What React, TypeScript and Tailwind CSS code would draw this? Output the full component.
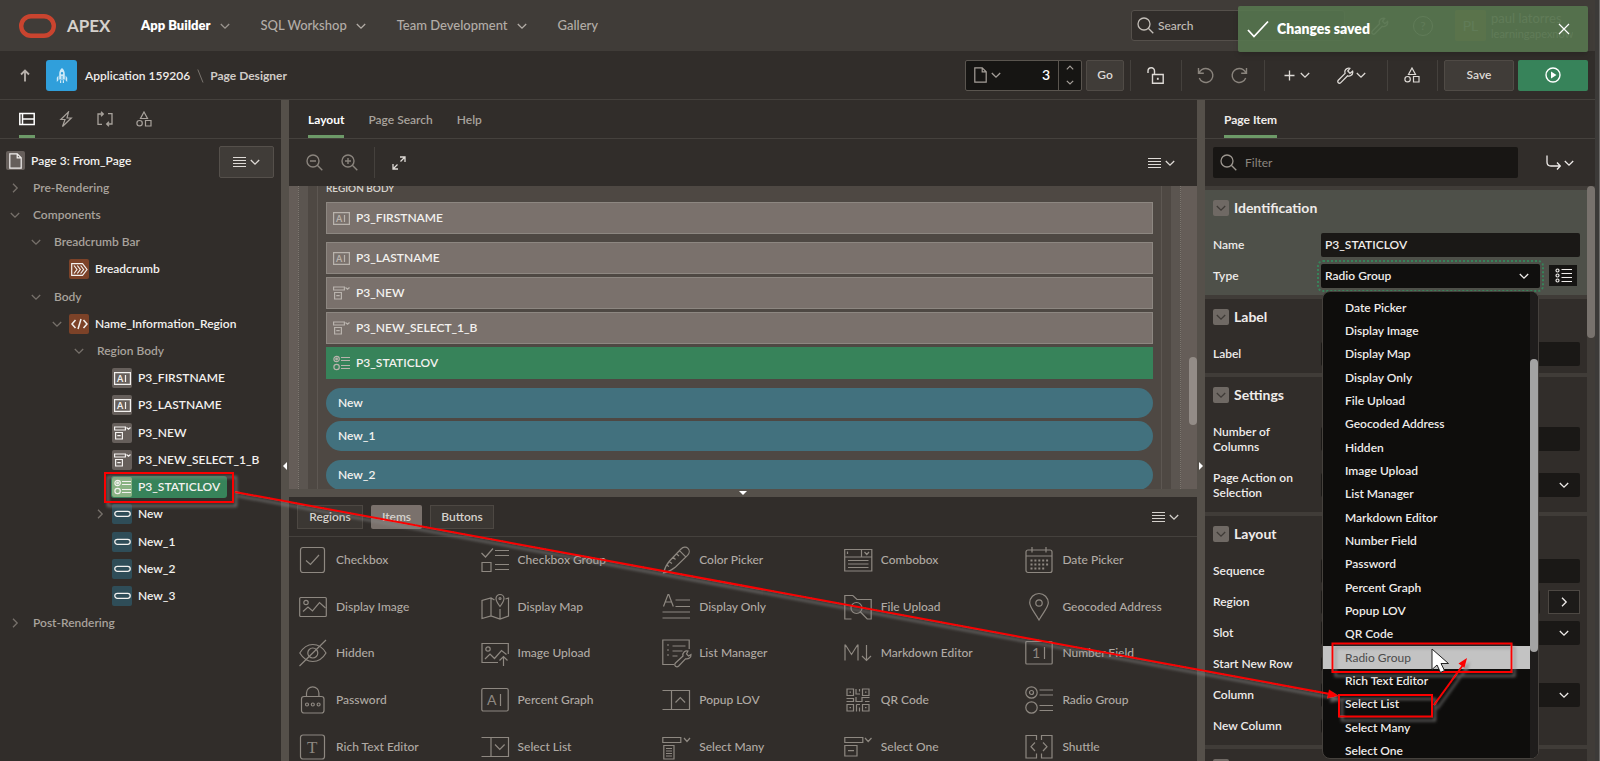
import React from "react";

type IconProps = { children?: React.ReactNode; size?: string; box?: string; stroke?: number; className?: string };

function Icon({ children, size = "size-4", box = "0 0 16 16", stroke = 1, className = "" }: IconProps) {
  return (
    <svg
      viewBox={box}
      className={`${size} shrink-0 ${className}`}
      fill="none"
      stroke="currentColor"
      strokeWidth={stroke}
      aria-hidden="true"
    >
      {children}
    </svg>
  );
}

const ChevronDown = ({ className = "" }: { className?: string }) => (
  <Icon size="w-[10px] h-[10px]" box="0 0 10 10" stroke={1.3} className={className}>
    <path d="M.8 3 5 7.2 9.2 3" />
  </Icon>
);

const ChevronRight = ({ className = "" }: { className?: string }) => (
  <Icon size="w-[10px] h-[10px]" box="0 0 10 10" stroke={1.3} className={className}>
    <path d="M3 .8 7.2 5 3 9.2" />
  </Icon>
);

const Lines = () => (
  <Icon size="w-[13px] h-[12px]" box="0 0 13 12" stroke={1}>
    <path d="M0 1.5h13M0 4.5h13M0 7.5h13M0 10.5h13" />
  </Icon>
);

const SearchIcon = ({ className = "" }: { className?: string }) => (
  <Icon size="size-[17px]" box="0 0 17 17" stroke={1.3} className={className}>
    <circle cx="7" cy="7" r="6" />
    <path d="m11.3 11.3 5 5" />
  </Icon>
);

const Shapes = ({ className = "" }: { className?: string }) => (
  <Icon stroke={1.2} className={className}>
    <path d="M8 1 11.5 7.5h-7z" />
    <circle cx="3.6" cy="12.2" r="2.7" />
    <path d="M9.5 9.5H15V15H9.5z" />
  </Icon>
);

const Wrench = ({ className = "", size = "size-[17px]" }: { className?: string; size?: string }) => (
  <Icon size={size} box="0 0 17 17" stroke={1.3} className={className}>
    <path d="M15.6 4.2 13 6.3 10.8 4l2-2.6C11 .8 8.600 1.800 8 3.800c-.3 1-.1 1.900.1 2.600L1.300 13.200c-.7.8-.7 1.900 0 2.500.7.7 1.800.6 2.500-.1l6.800-6.800c1 .4 2.300.3 3.200-.3 1.500-.9 2.200-2.700 1.800-4.300z" />
  </Icon>
);

const TextFieldGlyph = () => (
  <Icon size="w-[17px] h-[13px]" box="0 0 17 13" stroke={1.2}>
    <path d="M.6.6h15.800v11.800H.6zM11.500 3v7" />
    <text x="3" y="9.800" fontSize="9" fontWeight="700" fill="currentColor" stroke="none">A</text>
  </Icon>
);

const SelectOneGlyph = () => (
  <Icon size="w-[17px] h-[14px]" box="0 0 17 14" stroke={1.2}>
    <path d="M.6 1h10.800v3H.6zM1.600 6.500h6.800v6.500H1.600zM3.300 9.700h3.400M12.500 1.500l2 1.800 2-1.800" />
  </Icon>
);

const RadioGlyph = () => (
  <Icon size="w-[17px] h-[16px]" box="0 0 17 16" stroke={1.2}>
    <circle cx="3.600" cy="4" r="2.700" />
    <circle cx="3.600" cy="4" r=".8" />
    <circle cx="3.600" cy="12" r="2.700" />
    <path d="M8 2.500h9M8 5.500h9M8 10.500h9M8 13.500h9" />
  </Icon>
);

const ButtonGlyph = () => (
  <Icon size="w-[17px] h-[8px]" box="0 0 17 8" stroke={1.3}>
    <rect x=".8" y="1.300" width="15.400" height="5" rx="2.500" />
  </Icon>
);

const BreadcrumbGlyph = () => (
  <Icon size="w-[17px] h-[13px]" box="0 0 17 13" stroke={1.2}>
    <path d="M.7.7h10.800l4.500 5.800-4.500 5.800H.7zM3 2.500l3 4-3 4M6.300 2.500l3 4-3 4M9.600 2.500l3 4-3 4" />
  </Icon>
);

const CodeGlyph = () => (
  <Icon size="w-[17px] h-[12px]" box="0 0 17 12" stroke={1.500}>
    <path d="M4.500 2 1 6l3.500 4M12.500 2 16 6l-3.500 4M10 1 7 11" />
  </Icon>
);

const PageGlyph = () => (
  <Icon size="w-[13px] h-[16px]" box="0 0 13 16" stroke={1.200}>
    <path d="M.8.8h7.400l4 4v10.400H.8zM8.200.8v4h4" />
  </Icon>
);

/* ---------- header ---------- */

function Header() {
  return (
    <header className="flex h-[51px] shrink-0 items-center bg-[#403c38] pl-[19px] pr-[7px] text-[#b3ada7]">
      <a href="#home" className="flex items-center gap-[11px]">
        <svg viewBox="0 0 37 24" className="h-6 w-[37px]" fill="none" aria-label="Oracle">
          <rect x="2.200" y="2.200" width="32.600" height="19.600" rx="9.800" stroke="#c9442f" strokeWidth="4.400" />
        </svg>
        <span className="w-[46px] text-[17px] font-bold text-[#d5d1cc]">APEX</span>
      </a>
      <nav className="ml-7 flex items-center gap-[31px] text-[13px] font-medium">
        <button className="flex items-center gap-[9px] font-extrabold text-white">
          App Builder <ChevronDown className="text-[#9b958f]" />
        </button>
        <button className="flex items-center gap-[9px]">
          SQL Workshop <ChevronDown />
        </button>
        <button className="flex items-center gap-[9px]">
          Team Development <ChevronDown />
        </button>
        <button>Gallery</button>
      </nav>
      <label className="ml-auto flex h-[31px] w-[214px] items-center gap-1 rounded-[3px] border border-[#55504b] bg-[#312d2a] pl-[5px] text-[#c3beb8]">
        <SearchIcon />
        <input
          aria-label="Search"
          placeholder="Search"
          className="min-w-0 flex-1 bg-transparent text-xs font-medium outline-none placeholder:text-[#c3beb8]"
        />
      </label>
      <button aria-label="Administration" className="ml-[26px]">
        <Wrench size="size-[18px]" />
      </button>
      <button
        aria-label="Help"
        className="ml-6 flex size-5 items-center justify-center rounded-full border border-current text-xs"
      >
        ?
      </button>
      <div className="ml-[22px] flex w-[133px] items-center gap-[5px]">
        <span className="flex size-[31px] shrink-0 items-center justify-center rounded-[2px] bg-[#7d6228] text-sm">PL</span>
        <span className="min-w-0 overflow-hidden leading-4">
          <span className="block text-[13px]">paul latorres</span>
          <span className="block text-[11px]">learningapexnow</span>
        </span>
      </div>
    </header>
  );
}

function Toast() {
  return (
    <div
      role="status"
      className="absolute right-3 top-1.5 flex h-[46px] w-[350px] items-center rounded-[2px] bg-[#56754f]/90 pl-[9px] pr-[18px] text-white shadow-md"
    >
      <Icon size="size-[22px]" box="0 0 22 22" stroke={1.800}>
        <path d="m1 12 6 6.500L21 3.500" />
      </Icon>
      <span className="ml-2 flex-1 text-sm font-extrabold">Changes saved</span>
      <button aria-label="Close">
        <Icon size="size-[12px]" box="0 0 12 12" stroke={1.200}>
          <path d="m1 1 10 10M11 1 1 11" />
        </Icon>
      </button>
    </div>
  );
}

const Divider = () => <span className="h-[31px] w-px shrink-0 bg-[#45413d]" />;

function Toolbar() {
  return (
    <div className="flex h-[49px] shrink-0 items-center border-b border-[#45413d] bg-[#312d2a] pr-[7px] text-xs text-[#dedad6]">
      <button aria-label="Up" className="ml-[19px] flex w-3 justify-center text-[#b8b2ac]">
        <Icon size="w-[10px] h-[13px]" box="0 0 10 13" stroke={1.800}>
          <path d="M5 12.500V1.500M1 5.500l4-4 4 4" />
        </Icon>
      </button>
      <span className="ml-[15px] flex size-[31px] items-center justify-center rounded-[3px] bg-[#309fdb] text-[#cfe9f7]">
        <svg viewBox="0 0 12 15" className="h-[15px] w-3" fill="currentColor" aria-hidden="true">
          <path fillRule="evenodd" d="M6 0c2 1.500 2.800 3.500 2.800 6v5.500H3.200V6C3.200 3.500 4 1.500 6 0zm0 4a1.200 1.200 0 1 0 0 2.400A1.200 1.200 0 0 0 6 4zM5.500 8h1v4h-1z" />
          <path d="M2.400 7.500.8 9.800V14l1.600-1.800zM9.600 7.500l1.600 2.300V14l-1.600-1.800zM4 12.200h1.200V15H4zM6.800 12.200H8V15H6.800z" />
        </svg>
      </span>
      <div className="flex items-center pt-0.5">
        <a href="#application" className="ml-2 font-semibold text-[#efecea]">Application 159206</a>
        <Icon size="w-[7px] h-[14px]" box="0 0 7 14" className="ml-[7px] text-[#7b756f]">
          <path d="M.8.5 6 13.500" />
        </Icon>
        <span className="ml-1.5 font-bold text-[#d0cbc6]">Page Designer</span>
      </div>

      <div className="ml-auto flex h-[31px] w-[117px] items-stretch rounded-[2px] border border-[#5a554f] bg-[#161513]">
        <button aria-label="Page finder" className="flex items-center gap-1 pl-2 text-[#a59f99]">
          <PageGlyph />
          <ChevronDown />
        </button>
        <input
          aria-label="Page number"
          defaultValue="3"
          className="min-w-0 flex-1 bg-transparent pr-2 text-right text-sm font-semibold text-white outline-none"
        />
        <span className="flex w-[23px] flex-col items-center justify-around border-l border-[#5a554f] text-[#a59f99]">
          <button aria-label="Next page">
            <Icon size="w-2 h-[5px]" box="0 0 8 5" stroke={1.200}><path d="m.8 4.300 3.200-3.300 3.200 3.300" /></Icon>
          </button>
          <button aria-label="Previous page">
            <Icon size="w-2 h-[5px]" box="0 0 8 5" stroke={1.200}><path d="M.8.8 4 4 7.200.8" /></Icon>
          </button>
        </span>
      </div>
      <button className="ml-1 mr-1.5 h-[31px] w-[38px] rounded-[2px] border border-[#504b46] bg-[#403c38] font-semibold">Go</button>
      <Divider />
      <button aria-label="Page unlocked" className="flex w-[50px] justify-center pr-0.5">
        <Icon size="size-[17px]" box="0 0 17 17" stroke={1.400}>
          <path d="M5.500 7.500h10.700v8.700H5.500zM7.500 7.500V4c0-2-1.200-3.200-3.200-3.200S1 2 1 4v2" />
          <path d="M10.800 10.800v2" strokeWidth="1.800" />
        </Icon>
      </button>
      <Divider />
      <button aria-label="Undo" className="ml-1.5 flex w-[34px] justify-center text-[#8a847d]">
        <Icon size="size-[17px]" box="0 0 17 17" stroke={1.400}>
          <path d="M1.500 1v5.300h5.300M2 6C3.500 3 6 1.500 8.800 1.500a7 7 0 1 1-6.500 9.500" />
        </Icon>
      </button>
      <button aria-label="Redo" className="mr-2 flex w-[34px] justify-center text-[#8a847d]">
        <Icon size="size-[17px]" box="0 0 17 17" stroke={1.400}>
          <path d="M15.500 1v5.300h-5.300M15 6C13.500 3 11 1.500 8.200 1.500A7 7 0 1 0 14.700 11" />
        </Icon>
      </button>
      <Divider />
      <button aria-label="Create" className="ml-1.5 flex w-[54px] items-center justify-center gap-[5px] pr-0.5">
        <Icon size="size-[11px]" box="0 0 11 11" stroke={1.300}><path d="M5.500.5v10M.5 5.500h10" /></Icon>
        <ChevronDown />
      </button>
      <button aria-label="Utilities" className="mr-2 flex w-[54px] items-center justify-center gap-0.5 pr-0.5">
        <Wrench />
        <ChevronDown />
      </button>
      <Divider />
      <button aria-label="Shared components" className="flex w-[49px] justify-center pr-0.5"><Shapes /></button>
      <Divider />
      <button className="ml-1.5 h-[31px] w-[70px] rounded-[2px] border border-[#504b46] bg-[#403c38] font-semibold">Save</button>
      <button aria-label="Save and run page" className="ml-1 flex h-[31px] w-[70px] items-center justify-center rounded-[2px] bg-[#37835a] text-white">
        <Icon stroke={1.400}>
          <circle cx="8" cy="8" r="7" />
          <path d="m6 4.500 5.500 3.500L6 11.500z" fill="currentColor" stroke="none" />
        </Icon>
      </button>
    </div>
  );
}

/* ---------- rendering tree ---------- */

type Kind = "crumb" | "region" | "text" | "select" | "radio" | "button";
type Node = { label: string; pad: string; chevron?: "open" | "closed"; kind?: Kind; selected?: boolean };

const GLYPHS: Record<Kind, { tint: string; node: React.ReactNode }> = {
  crumb: { tint: "bg-[#7c4228]", node: <BreadcrumbGlyph /> },
  region: { tint: "bg-[#7c4228]", node: <CodeGlyph /> },
  text: { tint: "bg-[#665f5b]", node: <TextFieldGlyph /> },
  select: { tint: "bg-[#665f5b]", node: <SelectOneGlyph /> },
  radio: { tint: "bg-[#8ab384]", node: <RadioGlyph /> },
  button: { tint: "bg-[#2f4d58]", node: <ButtonGlyph /> },
};

const TREE: Node[] = [
  { label: "Pre-Rendering", pad: "pl-[10px]", chevron: "closed" },
  { label: "Components", pad: "pl-[10px]", chevron: "open" },
  { label: "Breadcrumb Bar", pad: "pl-[31px]", chevron: "open" },
  { label: "Breadcrumb", pad: "pl-[52px]", kind: "crumb" },
  { label: "Body", pad: "pl-[31px]", chevron: "open" },
  { label: "Name_Information_Region", pad: "pl-[52px]", chevron: "open", kind: "region" },
  { label: "Region Body", pad: "pl-[74px]", chevron: "open" },
  { label: "P3_FIRSTNAME", pad: "pl-[95px]", kind: "text" },
  { label: "P3_LASTNAME", pad: "pl-[95px]", kind: "text" },
  { label: "P3_NEW", pad: "pl-[95px]", kind: "select" },
  { label: "P3_NEW_SELECT_1_B", pad: "pl-[95px]", kind: "select" },
  { label: "P3_STATICLOV", pad: "pl-[95px]", kind: "radio", selected: true },
  { label: "New", pad: "pl-[95px]", chevron: "closed", kind: "button" },
  { label: "New_1", pad: "pl-[95px]", kind: "button" },
  { label: "New_2", pad: "pl-[95px]", kind: "button" },
  { label: "New_3", pad: "pl-[95px]", kind: "button" },
  { label: "Post-Rendering", pad: "pl-[10px]", chevron: "closed" },
];

function TreeRow({ node }: { node: Node }) {
  return (
    <li className={`flex min-h-0 flex-1 items-center ${node.pad}`}>
      <span className="w-[10px] text-[#77716b]">
        {node.chevron === "open" && <ChevronDown />}
        {node.chevron === "closed" && <ChevronRight />}
      </span>
      {node.kind ? (
        <button
          className={`ml-1.5 flex items-center gap-1.5 rounded-[3px] py-px pl-px pr-[7px] text-[#f3f1ef] ${node.selected ? "bg-[#37835a]" : ""}`}
        >
          <span className={`flex size-5 items-center justify-center rounded-[2px] ${GLYPHS[node.kind].tint}`}>
            {GLYPHS[node.kind].node}
          </span>
          {node.label}
        </button>
      ) : (
        <button className="ml-[13px] text-[#a8a29c]">{node.label}</button>
      )}
    </li>
  );
}

function TreePanel() {
  return (
    <aside className="w-[281px] shrink-0 overflow-hidden text-xs font-semibold">
      <div className="flex h-[39px] items-stretch border-b border-[#45413d] pl-[19px] text-[#a8a29c]">
        <div className="flex gap-[23px]">
          <button aria-label="Rendering" className="border-b-[3px] border-[#6d9a68] pt-[3px] text-white">
            <Icon stroke={1.500}><path d="M.8 2.500h14.400v11H.8zM3.500 2.500v11M3.500 8h11.700" /></Icon>
          </button>
          <button aria-label="Dynamic actions" className="border-b-[3px] border-transparent pt-[3px]">
            <Icon stroke={1.200}><path d="M10.500.8 2.800 8.500H7l-2.500 7L13.300 7H9z" /></Icon>
          </button>
          <button aria-label="Processing" className="border-b-[3px] border-transparent pt-[3px]">
            <Icon stroke={1.300}>
              <path d="M5 13.300H1V3h4.800M4 .8 6.300 3 4 5.200M11 2.700h4V13h-4.800M12 10.800 9.700 13l2.300 2.200" />
            </Icon>
          </button>
          <button aria-label="Page shared components" className="border-b-[3px] border-transparent pt-[3px]">
            <Shapes />
          </button>
        </div>
      </div>
      <div className="flex h-[35px] items-start justify-between pl-1.5 pr-[7px] pt-[7px]">
        <button className="flex h-[29px] items-center gap-1.5 text-[#f3f1ef]">
          <span className="flex size-[19px] items-center justify-center rounded-[2px] bg-[#665f5b]"><PageGlyph /></span>
          Page 3: From_Page
        </button>
        <button aria-label="Tree menu" className="flex h-8 w-[55px] items-center justify-center gap-1 rounded-[2px] border border-[#55504b] bg-[#403c38] text-[#dedad6]">
          <Lines />
          <ChevronDown />
        </button>
      </div>
      <ul className="flex h-[463px] flex-col">
        {TREE.map((n) => <TreeRow key={n.label} node={n} />)}
      </ul>
    </aside>
  );
}

function Splitter({ dir }: { dir: "left" | "right" }) {
  return (
    <div className="flex w-2 shrink-0 items-center justify-center bg-[#55504a] pt-[70px]">
      <svg viewBox="0 0 4 8" className="h-2 w-1" fill="#fff" aria-hidden="true">
        <path d={dir === "left" ? "M4 0v8L0 4z" : "M0 0v8l4-4z"} />
      </svg>
    </div>
  );
}

/* ---------- layout canvas ---------- */

function CanvasItem({ label, glyph, gap, selected }: { label: string; glyph: React.ReactNode; gap: string; selected?: boolean }) {
  return (
    <button
      className={`flex h-8 w-full shrink-0 items-center gap-1.5 border pl-1.5 text-xs font-semibold text-[#f3f1ef] ${gap} ${
        selected ? "border-[#37835a] bg-[#37835a]" : "border-[#8d8781] bg-[#7a716c]"
      }`}
    >
      <span className="flex w-[17px] justify-center text-[#b9b3ad]">{glyph}</span>
      {label}
    </button>
  );
}

function CanvasButton({ label, gap }: { label: string; gap: string }) {
  return (
    <button className={`flex h-[30px] w-full shrink-0 items-center rounded-full bg-[#42717e] pl-3 text-xs font-semibold text-[#f3f1ef] ${gap}`}>
      {label}
    </button>
  );
}

function Canvas() {
  return (
    <div className="relative flex h-[303px] shrink-0 overflow-hidden bg-[#655d58] pl-[9px] pr-4">
      <div className="flex flex-1 border-x border-dotted border-[#7d766f] bg-[#5b5550] px-[9px]">
        <div className="flex flex-1 bg-[#4e4843] px-[9px]">
          <div className="flex flex-1 flex-col border-x border-[#5d5752] px-2">
            <p className="-mt-1 text-[10px] font-semibold leading-3 text-[#d8d4cf]">REGION BODY</p>
            <CanvasItem label="P3_FIRSTNAME" glyph={<TextFieldGlyph />} gap="mt-2" />
            <CanvasItem label="P3_LASTNAME" glyph={<TextFieldGlyph />} gap="mt-2" />
            <CanvasItem label="P3_NEW" glyph={<SelectOneGlyph />} gap="mt-[3px]" />
            <CanvasItem label="P3_NEW_SELECT_1_B" glyph={<SelectOneGlyph />} gap="mt-[3px]" />
            <CanvasItem label="P3_STATICLOV" glyph={<RadioGlyph />} gap="mt-[3px]" selected />
            <CanvasButton label="New" gap="mt-[9px]" />
            <CanvasButton label="New_1" gap="mt-[3px]" />
            <CanvasButton label="New_2" gap="mt-[9px]" />
          </div>
        </div>
      </div>
      <span className="absolute right-0 top-[171px] h-[68px] w-2 rounded-full bg-[#938c87]" />
    </div>
  );
}

/* ---------- component gallery ---------- */

const P: Record<string, React.ReactNode> = {
  Checkbox: <><rect x="1.500" y="1.500" width="24" height="25" rx="2.500" /><path d="m7 14.500 4.500 4L20 9" /></>,
  "Checkbox Group": <path d="m.5 7 4 4L12 2.500M14 4.500h14M14 9.500h14M1 16.500h9v9H1zM14 18.500h14M14 23.500h14" />,
  "Color Picker": (
    <path d="M1.500 27c1-4.500 3-8.500 6-12L19 3c2.200-2.300 5.300-2.300 7-.6s1.700 4.700-.5 7L13.500 21C10 24 6 26 1.500 27zM17.500 4.700l6 6M7 15.500l3 2M11 11l2.500 2.500M14.500 8l2.500 2M4.500 19l2.500 1.500" />
  ),
  Combobox: <path d="M.7 3.500h27.100v21.500H.7zM.7 11h27.100M17.500 3.500V11M20.500 6l2.300 2.500L25 6M3.500 5.500V8M4 14.500h20.500M4 18h20.500M4 21.500h20.500" />,
  "Date Picker": (
    <>
      <rect x="1" y="4" width="26" height="22.500" rx="2" />
      <path d="M1 10h26M7 1v5.500M21 1v5.500" />
      <path d="M5.500 14.500h18M5.500 18.500h18M5.500 22.500h14" strokeDasharray="2 1.900" strokeWidth="1.800" />
    </>
  ),
  "Display Image": (
    <><rect x=".7" y="4.500" width="26.600" height="19" rx="1" /><circle cx="7" cy="9.500" r="2.200" /><path d="m4 18.500 5-4.500 4.500 4 7-8.500 6 5.500" /></>
  ),
  "Display Map": (
    <>
      <path d="M13.500 7 10 5 1 7.500v18L10 23l9 3 8.500-3V5l-3 1M10 5v18M19 16v10" />
      <path d="M19 13.500c-3-4-4-5.500-4-8a4 4 0 0 1 8 0c0 2.500-1 4-4 8z" /><circle cx="19" cy="5.500" r="1" />
    </>
  ),
  "Display Only": <path d="m1.500 13.500 4.500-12h.8l4.500 12M3.200 9h6.500M13.500 7h14.500M13.500 13.500h14.500M.5 19h27.500M.5 25h27.500" />,
  "File Upload": (
    <><path d="M7.500 26H.8V2.500h8L13 6.500h14.200V26h-4l-7.200-7.500" /><circle cx="12.500" cy="15" r="5.500" /></>
  ),
  "Geocoded Address": (
    <><path d="M14 27C9 18.500 4.700 14 4.700 9.800a9.300 9.300 0 0 1 18.600 0C23.300 14 19 18.500 14 27z" /><circle cx="14" cy="10" r="3.200" /></>
  ),
  Hidden: (
    <><path d="M.8 14C4.500 8 9 5.500 13.800 5.500S23.500 8 27 14c-3.500 6-8.400 8.500-13.200 8.500S4.500 20 .8 14zM.5 27 27 1" /><circle cx="13.800" cy="14" r="5" /></>
  ),
  "Image Upload": (
    <>
      <path d="M17 23.500H1V4.500h26.300V15" /><circle cx="7" cy="10" r="2.200" />
      <path d="m4 20 5-5 4.500 4.500 7-8 5 4M22.500 27V17.500M18.500 21.500l4-4 4 4" />
    </>
  ),
  "List Manager": (
    <>
      <path d="M12 25.500H.8V1h26.400v9M5 6h2M5 11h2M5 16h2M10.500 7h13M10.500 12h10M10.500 17h5" />
      <path d="M29 15.500 26.500 17l-2-2 1.500-3c-3-.8-5.800 1.800-5 5l-7.500 7c-1 1.200-1 2.500 0 3.300s2.200.7 3.200-.3l6.800-7.200c3 .7 5.800-1.300 5.500-4.300z" />
    </>
  ),
  "Markdown Editor": <path d="M1 21.500V6h.5l6 9.500 6-9.500h.5v15.500M22.500 6v15.500M18 17l4.500 4.500L27 17" />,
  "Number Field": (
    <>
      <rect x=".8" y="2.500" width="26.400" height="22.500" rx="1" />
      <path d="M19.500 8v12" />
      <text x="7" y="19" fontSize="14" fontWeight="400" fill="currentColor" stroke="none">1</text>
    </>
  ),
  Password: (
    <>
      <rect x="2.500" y="10.500" width="22.500" height="16.500" rx="2.500" /><path d="M7.500 10.500V7a6.200 6.200 0 0 1 12.400 0v3.500" />
      <circle cx="8" cy="18.500" r="1.500" /><circle cx="13.800" cy="18.500" r="1.500" /><circle cx="19.600" cy="18.500" r="1.500" />
    </>
  ),
  "Percent Graph": (
    <>
      <rect x=".8" y="2.500" width="26.400" height="22.500" rx="1.500" />
      <path d="M19.500 8v12" />
      <text x="6" y="19" fontSize="14" fontWeight="400" fill="currentColor" stroke="none">A</text>
    </>
  ),
  "Popup LOV": <path d="M.5 4.500h27v19H.5M9.500 4.500v19M13.500 16.500l4.800-5 4.800 5" />,
  "QR Code": (
    <path d="M3 3h6.500v6.500H3zM18.500 3H25v6.500h-6.500zM3 18.500h6.500V25H3zM18.500 18.500H25V25h-6.500zM5.500 6.200h1.500M21 6.200h1.500M5.500 21.700h1.500M21 21.700h1.500M12 3v5h4M15.500 3v2.500M2.500 12.500h7v3h-7M12 11v4.500h6v-4h7.500M21 15.500h4.500M12.500 18.500h3.500M12.500 18.500V25.500M15.500 21.500v4" />
  ),
  "Radio Group": (
    <><circle cx="6.500" cy="6.500" r="5.700" /><circle cx="6.500" cy="6.500" r="2" /><circle cx="6.500" cy="21.500" r="5.700" /><path d="M14.500 4h13.500M14.500 9h13.500M14.500 19.500h13.500M14.500 24.500h13.500" /></>
  ),
  "Rich Text Editor": (
    <>
      <rect x="1.500" y="2" width="24" height="24" rx="2.500" />
      <text x="8" y="20" fontSize="17" fontWeight="400" fontFamily="Liberation Serif" fill="currentColor" stroke="none">T</text>
    </>
  ),
  "Select List": <path d="M.5 4.500h27v19H.5M10 4.500v19M14 11.500l4.800 5 4.800-5" />,
  "Select Many": <path d="M.8 4.500h18v5H.8zM22 5l3 3.500L28 5M1.800 12.500H12v13.500H1.800zM4 15.500h6M4 18h6M4 20.500h6M4 23h6" />,
  "Select One": <path d="M.8 4.500h18v5H.8zM21 5l3.200 3.500L27.500 5M.8 12.500H13v10.500H.8zM4 17.700h6" />,
  Shuttle: <path d="M8 2.500H1V25h7M11.500 7V2.500H8M11.500 20.500V25H8M20 2.500h7V25h-7M16.500 7V2.500H20M16.500 20.500V25H20M10 9.500 6 13.700l4 4.300M18 9.500l4 4.200-4 4.300" />,
};

const GALLERY = [
  "Checkbox", "Checkbox Group", "Color Picker", "Combobox", "Date Picker",
  "Display Image", "Display Map", "Display Only", "File Upload", "Geocoded Address",
  "Hidden", "Image Upload", "List Manager", "Markdown Editor", "Number Field",
  "Password", "Percent Graph", "Popup LOV", "QR Code", "Radio Group",
  "Rich Text Editor", "Select List", "Select Many", "Select One", "Shuttle",
];

function Gallery() {
  return (
    <section className="min-h-0 flex-1 overflow-hidden text-xs font-medium">
      <div className="flex h-10 items-center gap-2 border-b border-[#45413d] pl-2 pr-3 font-semibold text-[#d5d1cc]">
        <button className="h-6 w-[66px] border border-[#4d4843] bg-[#3b3733]">Regions</button>
        <button className="h-6 w-[51px] rounded-[2px] bg-[#7a716c]">Items</button>
        <button className="h-6 w-16 border border-[#4d4843] bg-[#3b3733]">Buttons</button>
        <button aria-label="Gallery menu" className="ml-auto flex items-center gap-1 pr-1.5"><Lines /><ChevronDown /></button>
      </div>
      <ul className="grid h-[233px] grid-cols-5 grid-rows-5">
        {GALLERY.map((name) => (
          <li key={name} className="flex min-h-0 items-center gap-[9px] pl-[10px] text-[#b0aaa4]">
            <Icon size="size-7" box="0 0 28 28" stroke={1.200} className="overflow-visible text-[#8e8881]">{P[name]}</Icon>
            {name}
          </li>
        ))}
      </ul>
    </section>
  );
}

function CenterPanel() {
  return (
    <main className="flex min-w-0 flex-1 flex-col">
      <div className="flex h-[39px] shrink-0 gap-6 border-b border-[#45413d] pl-[19px] text-xs font-semibold text-[#a8a29c]">
        <button className="border-b-[3px] border-[#6d9a68] pt-1 font-bold text-white">Layout</button>
        <button className="border-b-[3px] border-transparent pt-1">Page Search</button>
        <button className="border-b-[3px] border-transparent pt-1">Help</button>
      </div>
      <div className="flex h-[47px] shrink-0 items-center pl-[17px] pr-[22px] text-[#dedad6]">
        <button aria-label="Zoom out" className="text-[#8a847d]">
          <Icon size="size-[17px]" box="0 0 17 17" stroke={1.400}><circle cx="7" cy="7" r="6" /><path d="m11.300 11.300 5 5M4 7h6" /></Icon>
        </button>
        <button aria-label="Zoom in" className="ml-[18px] text-[#8a847d]">
          <Icon size="size-[17px]" box="0 0 17 17" stroke={1.400}><circle cx="7" cy="7" r="6" /><path d="m11.300 11.300 5 5M4 7h6M7 4v6" /></Icon>
        </button>
        <span className="ml-4 mr-[17px]"><span className="block h-[31px] w-px bg-[#45413d]" /></span>
        <button aria-label="Expand">
          <Icon size="size-[14px]" box="0 0 14 14" stroke={1.300}>
            <path d="M8 1h5v5M13 1 8.500 5.500M6 13H1V8M1 13l4.500-4.500" />
          </Icon>
        </button>
        <button aria-label="Layout menu" className="ml-auto flex items-center gap-1"><Lines /><ChevronDown /></button>
      </div>
      <Canvas />
      <div className="flex h-2 shrink-0 items-center justify-center bg-[#55504a]">
        <svg viewBox="0 0 8 4" className="h-1 w-2" fill="#fff" aria-hidden="true"><path d="M0 0h8L4 4z" /></svg>
      </div>
      <Gallery />
    </main>
  );
}

/* ---------- property editor ---------- */

const TYPES = [
  "Date Picker", "Display Image", "Display Map", "Display Only", "File Upload", "Geocoded Address", "Hidden",
  "Image Upload", "List Manager", "Markdown Editor", "Number Field", "Password", "Percent Graph", "Popup LOV",
  "QR Code", "Radio Group", "Rich Text Editor", "Select List", "Select Many", "Select One",
];

function TypeOptions() {
  return (
    <div className="absolute left-px top-[27px] z-10 h-[468px] w-[217px] overflow-hidden rounded-lg border border-[#45413d] bg-[#0e0d0c]">
      <ul role="listbox" aria-label="Type options" className="pr-2 pt-1">
        {TYPES.map((t, i) => (
          <li
            key={t}
            role="option"
            aria-selected={t === "Radio Group"}
            className={`pl-[22px] ${i % 3 === 2 ? "h-6 leading-6" : "h-[23px] leading-[23px]"} ${
              t === "Radio Group" ? "bg-[#c3c3c3] font-normal text-[#4c4c4c]" : ""
            }`}
          >
            {t}
          </li>
        ))}
      </ul>
      <span className="absolute inset-y-0 right-0 w-2 bg-[#1f1d1c]" />
      <span className="absolute right-0 top-[67px] h-[293px] w-2 rounded-full bg-[#a3a3a3]" />
    </div>
  );
}

function Group({ title, active, children }: { title: string; active?: boolean; children?: React.ReactNode }) {
  return (
    <section className={`border-t-4 border-[#403c38] pb-1 ${active ? "bg-[#4e5049]" : "bg-[#312d2a]"}`}>
      <h2 className="flex h-[39px] items-center gap-[5px] pb-1 pl-2 text-sm font-bold">
        <button aria-label={`Collapse ${title || "section"}`} className="flex size-4 items-center justify-center rounded-[2px] bg-[#6f6964] text-[#3f3b37]">
          <ChevronDown />
        </button>
        {title}
      </h2>
      {children}
    </section>
  );
}

function Row({ id, label, tall, children }: { id: string; label: string; tall?: boolean; children: React.ReactNode }) {
  return (
    <div className={`flex items-center pl-2 pr-[7px] ${tall ? "h-[46px]" : "h-[31px]"}`}>
      <label htmlFor={id} className="w-[108px] shrink-0 pr-5 leading-[15px]">{label}</label>
      <div className="flex min-w-0 flex-1 items-center">{children}</div>
    </div>
  );
}

const FIELD = "h-6 w-full min-w-0 rounded-[2px] bg-[#1a1816] px-1 outline-none";

function SelectField({ id }: { id: string }) {
  return (
    <span className="relative block w-full">
      <select id={id} className={`${FIELD} appearance-none`} defaultValue=""><option value="" /></select>
      <ChevronDown className="pointer-events-none absolute right-[11px] top-[7px]" />
    </span>
  );
}

function PropertyPanel() {
  return (
    <aside className="flex w-[390px] shrink-0 flex-col overflow-hidden text-xs font-semibold text-[#efecea]">
      <div className="flex h-[39px] shrink-0 border-b border-[#45413d] pl-[19px]">
        <button className="border-b-[3px] border-[#6d9a68] pt-1 font-bold">Page Item</button>
      </div>
      <div className="flex h-[47px] shrink-0 items-center pl-2">
        <label className="flex h-[31px] w-[305px] items-center gap-2 rounded-[2px] bg-[#181614] pl-[7px] text-[#9c968f]">
          <SearchIcon />
          <input aria-label="Filter" placeholder="Filter" className="min-w-0 flex-1 bg-transparent font-normal outline-none placeholder:text-[#8b857e]" />
        </label>
        <button aria-label="Go to group" className="ml-7 flex items-center gap-[3px]">
          <Icon size="size-[15px]" box="0 0 15 15" stroke={1.300}>
            <path d="M1 .5v6.500c0 2.500 1 4 4 4h9M11 7.500l3.300 3.500-3.300 3.500" />
          </Icon>
          <ChevronDown />
        </button>
      </div>
      <div className="relative min-h-0 flex-1 overflow-hidden bg-[#403c38] pr-2">
        <Group title="Identification" active>
          <Row id="p-name" label="Name">
            <input id="p-name" defaultValue="P3_STATICLOV" className={FIELD} />
          </Row>
          <Row id="p-type" label="Type">
            <div className="relative w-[219px]">
              <select
                id="p-type"
                defaultValue="Radio Group"
                className="block h-6 w-full appearance-none rounded-[2px] bg-[#100f0e] px-1 outline-2 outline-offset-2 outline-dotted outline-[#37835a]"
              >
                <option>Radio Group</option>
              </select>
              <ChevronDown className="pointer-events-none absolute right-[11px] top-[7px]" />
              <TypeOptions />
            </div>
            <button aria-label="List of types" className="ml-[9px] flex h-[21px] w-7 items-center justify-center bg-[#161513]">
              <Icon size="w-[17px] h-[15px]" box="0 0 17 15" stroke={1.200}>
                <circle cx="2.500" cy="2.500" r="1.500" /><circle cx="2.500" cy="7.500" r="1.500" /><circle cx="2.500" cy="12.500" r="1.500" />
                <path d="M6.500 1.500H17M6.500 5.500H17M6.500 9.500H17M6.500 13.500H17" />
              </Icon>
            </button>
          </Row>
        </Group>
        <Group title="Label">
          <Row id="p-label" label="Label"><input id="p-label" className={FIELD} /></Row>
        </Group>
        <Group title="Settings">
          <Row id="p-cols" label="Number of Columns" tall><input id="p-cols" className={FIELD} /></Row>
          <Row id="p-action" label="Page Action on Selection" tall><SelectField id="p-action" /></Row>
        </Group>
        <Group title="Layout">
          <Row id="p-seq" label="Sequence"><input id="p-seq" className={FIELD} /></Row>
          <Row id="p-region" label="Region">
            <select id="p-region" className="h-6 w-[219px] appearance-none rounded-[2px] bg-[#1a1816]" />
            <button aria-label="Go to region" className="ml-2 flex h-6 w-8 items-center justify-center border border-[#4d4843] bg-[#1d1b19]">
              <ChevronRight />
            </button>
          </Row>
          <Row id="p-slot" label="Slot"><SelectField id="p-slot" /></Row>
          <Row id="p-newrow" label="Start New Row"><input id="p-newrow" type="checkbox" className="size-4 appearance-none rounded bg-[#1a1816]" /></Row>
          <Row id="p-column" label="Column"><SelectField id="p-column" /></Row>
          <Row id="p-newcol" label="New Column"><input id="p-newcol" type="checkbox" className="size-4 appearance-none rounded bg-[#1a1816]" /></Row>
        </Group>
        <Group title="" />
        <span className="absolute right-0 top-0 h-[152px] w-2 rounded-full bg-[#78726d]" />
      </div>
    </aside>
  );
}

/* ---------- walkthrough marks drawn over the designer ---------- */

function Walkthrough() {
  return (
    <svg viewBox="0 0 1600 761" className="pointer-events-none absolute left-0 top-0 z-20 h-[761px] w-[1600px]" fill="none" aria-hidden="true">
      <defs>
        <filter id="soft" filterUnits="userSpaceOnUse" x="0" y="0" width="1600" height="761">
          <feDropShadow dx="3" dy="4" stdDeviation="1.500" floodColor="#8a8a8a" floodOpacity="0.700" />
        </filter>
      </defs>
      <g filter="url(#soft)" stroke="#fb0505" strokeWidth="2">
        <rect x="105" y="473" width="128" height="29" />
        <path d="M235 492 1330 694" />
        <path d="m1327 698.500 2-9 10 6.500z" fill="#fb0505" strokeWidth="0" />
        <rect x="1332.500" y="643.500" width="179" height="28.500" />
        <rect x="1339" y="695" width="93" height="21.500" />
        <path d="m1434 705 29-40" />
        <path d="m1467 658-2.500 10-6-4.500z" fill="#fb0505" strokeWidth="0" />
      </g>
      <path d="M1432 649v20.500l5-4.500 3.500 7.500 4-2-3.500-7h7.500z" fill="#fff" stroke="#222" strokeWidth="1" />
    </svg>
  );
}

export default function App() {
  return (
    <div className="relative flex h-screen overflow-hidden bg-[#3c3a38] font-['Lato','Open_Sans',sans-serif] leading-normal">
      <div className="flex min-w-0 flex-1 flex-col bg-[#312d2a]">
        <Header />
        <Toolbar />
        <div className="flex min-h-0 flex-1">
          <TreePanel />
          <Splitter dir="left" />
          <CenterPanel />
          <Splitter dir="right" />
          <PropertyPanel />
        </div>
      </div>
      <div className="w-[5px] shrink-0 border-r border-[#6b6967] bg-[#3c3a38]" />
      <Toast />
      <Walkthrough />
    </div>
  );
}
